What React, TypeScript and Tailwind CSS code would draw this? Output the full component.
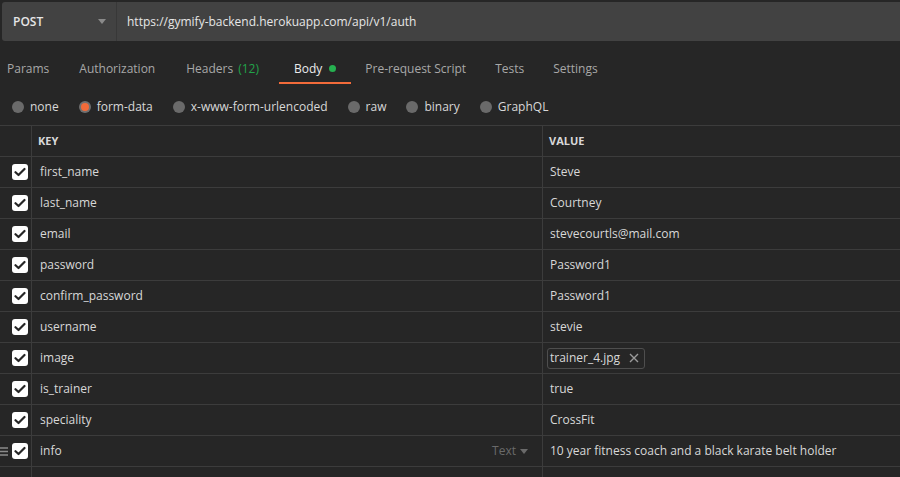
import React from "react";

const rows: { k: string; v: string; file?: boolean; hover?: boolean }[] = [
  { k: "first_name", v: "Steve" },
  { k: "last_name", v: "Courtney" },
  { k: "email", v: "stevecourtls@mail.com" },
  { k: "password", v: "Password1" },
  { k: "confirm_password", v: "Password1" },
  { k: "username", v: "stevie" },
  { k: "image", v: "trainer_4.jpg", file: true },
  { k: "is_trainer", v: "true" },
  { k: "speciality", v: "CrossFit" },
  { k: "info", v: "10 year fitness coach and a black karate belt holder", hover: true },
  { k: "", v: "" },
];

function Check() {
  return (
    <div className="w-[16px] h-[16px] rounded-[3px] bg-white flex items-center justify-center">
      <svg width="12" height="10" viewBox="0 0 12 10">
        <path d="M1.5 5.2 L4.5 8 L10.5 2" stroke="#262626" strokeWidth="2.2" fill="none" strokeLinecap="round" strokeLinejoin="round" />
      </svg>
    </div>
  );
}

function Radio({ label, active }: { label: string; active?: boolean }) {
  return (
    <div className="flex items-center gap-[6px]">
      <div className={"w-[12px] h-[12px] rounded-full flex items-center justify-center " + (active ? "bg-[#707070]" : "bg-[#6a6a6a]")}>
        {active && <div className="w-[8px] h-[8px] rounded-full bg-[#f26b3a]" />}
      </div>
      <span className="text-[#d8d8d8]">{label}</span>
    </div>
  );
}

export default function App() {
  return (
    <div className="w-[900px] h-[477px] overflow-hidden bg-[#262626] text-[12px] text-[#d8d8d8]" style={{ fontFamily: '"Open Sans", "Noto Sans", sans-serif' }}>
      <div className="pt-[2px] pl-[2px] bg-[#262626]">
        <div className="h-[39px] flex bg-[#424242] rounded-l-[3px]">
          <div className="w-[115px] flex items-center justify-between pl-[11px] pr-[10px] border-r border-[#383838]">
            <span className="font-semibold text-[12px] text-[#e6e6e6]">POST</span>
            <svg width="8" height="5" viewBox="0 0 8 5"><path d="M0 0 H8 L4 5 Z" fill="#8a8a8a" /></svg>
          </div>
          <div className="flex items-center pl-[10px] text-[12px] text-[#e6e6e6]">https://gymify-backend.herokuapp.com/api/v1/auth</div>
        </div>
      </div>
      <div className="h-[47px] pt-[8px] flex items-stretch text-[12px] text-[#a8a8a8]">
        <div className="ml-[7px] flex items-center">Params</div>
        <div className="ml-[30px] flex items-center">Authorization</div>
        <div className="ml-[31px] flex items-center">Headers <span className="ml-[5px] text-[#22a34a]">(12)</span></div>
        <div className="ml-[20px] px-[15px] flex items-center relative text-[#ececec]">
          Body
          <span className="ml-[7px] w-[7px] h-[7px] rounded-full bg-[#26b050] inline-block" />
          <div className="absolute left-0 right-0 top-[33px] h-[2px] bg-[#f26b3a]" />
        </div>
        <div className="ml-[14px] flex items-center">Pre-request Script</div>
        <div className="ml-[29px] flex items-center">Tests</div>
        <div className="ml-[29px] flex items-center">Settings</div>
      </div>
      <div className="h-[38px] flex items-center pl-[12px] gap-[20px] border-b border-[#3c3c3c]">
        <Radio label="none" />
        <Radio label="form-data" active />
        <Radio label="x-www-form-urlencoded" />
        <Radio label="raw" />
        <Radio label="binary" />
        <Radio label="GraphQL" />
      </div>
      <div className="grid grid-cols-[32px_511px_1fr]">
        <div className="h-[31px] border-r border-b border-[#3c3c3c]" />
        <div className="h-[31px] border-r border-b border-[#3c3c3c] flex items-center pl-[6px] text-[11px] font-bold text-[#d8d8d8]">KEY</div>
        <div className="h-[31px] border-b border-[#3c3c3c] flex items-center pl-[6px] text-[11px] font-bold text-[#d8d8d8]">VALUE</div>
        {rows.map((r, i) => (
          <React.Fragment key={i}>
            <div className="h-[31px] border-r border-b border-[#3c3c3c] flex items-center justify-end pr-[3px] relative">
              {r.hover && (
                <svg className="absolute left-0 top-[11px]" width="8" height="9" viewBox="0 0 8 9">
                  <path d="M0 1 H8 M0 4.5 H8 M0 8 H8" stroke="#8a8a8a" strokeWidth="1.3" />
                </svg>
              )}
              {r.k && <Check />}
            </div>
            <div className="h-[31px] border-r border-b border-[#3c3c3c] flex items-center justify-between pl-[8px] pr-[14px]">
              <span>{r.k}</span>
              {r.hover && (
                <span className="flex items-center gap-[4px] text-[#6a6a6a]">
                  Text
                  <svg width="8" height="5" viewBox="0 0 8 5"><path d="M0 0 H8 L4 5 Z" fill="#6a6a6a" /></svg>
                </span>
              )}
            </div>
            <div className="h-[31px] border-b border-[#3c3c3c] flex items-center pl-[7px]">
              {r.file ? (
                <span className="-ml-[3px] flex items-center gap-[9px] h-[21px] pl-[2px] pr-[5px] border border-[#4e4e4e] rounded-[3px]">
                  {r.v}
                  <svg width="10" height="10" viewBox="0 0 10 10"><path d="M1 1 L9 9 M9 1 L1 9" stroke="#9a9a9a" strokeWidth="1.4" /></svg>
                </span>
              ) : (
                <span>{r.v}</span>
              )}
            </div>
          </React.Fragment>
        ))}
      </div>
    </div>
  );
}
